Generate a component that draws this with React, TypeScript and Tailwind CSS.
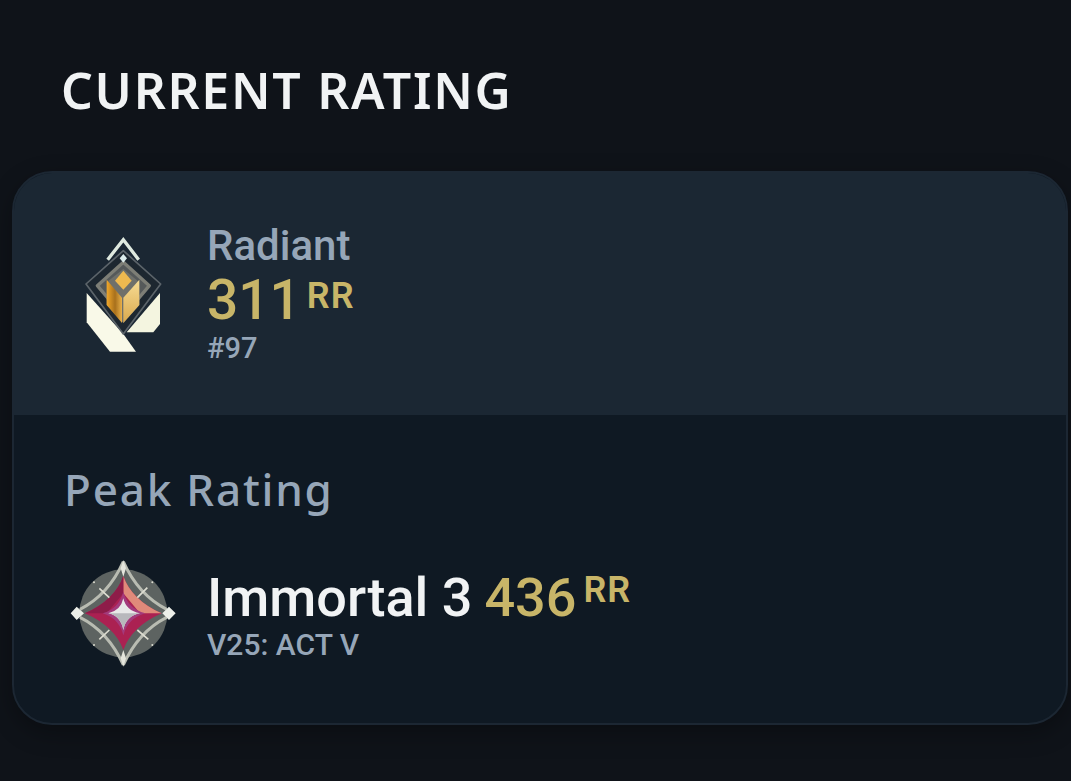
import React from "react";

const RadiantIcon = () => (
  <svg width="120" height="150" viewBox="0 0 360 450" className="block shrink-0">
    <defs>
      <linearGradient id="wingLeft" x1="0" y1="0" x2="1" y2="0">
        <stop offset="0" stopColor="#f0a72a" />
        <stop offset="0.55" stopColor="#a8701c" />
        <stop offset="1" stopColor="#e8b04a" />
      </linearGradient>
      <linearGradient id="wingRight" x1="0" y1="0" x2="0" y2="1">
        <stop offset="0" stopColor="#f7dc94" />
        <stop offset="1" stopColor="#d9a94e" />
      </linearGradient>
    </defs>
    <path d="M80 222 L190 345 L228 398 L150 398 L80 310 Z" fill="#f9f9e8" />
    <path d="M300 222 L300 315 L280 340 L200 340 Z" fill="#f4f5e0" />
    <path d="M190 95 L302 195 L190 345 L78 195 Z" fill="#1d2730" stroke="#5c646a" strokeWidth="5" strokeLinejoin="round" />
    <path d="M190 130 L268 200 L190 292 L112 200 Z" fill="#55595a" stroke="#7d7e76" strokeWidth="10" strokeLinejoin="round" />
    <path d="M190 150 L238 190 L238 258 L190 312 L140 258 L140 190 Z" fill="#6f706a" />
    <path d="M190 155 L215 185 L190 212 L165 185 Z" fill="#eeb94f" />
    <path d="M140 182 L186 236 L186 312 L140 258 Z" fill="url(#wingLeft)" />
    <path d="M238 182 L190 236 L190 312 L238 258 Z" fill="url(#wingRight)" />
    <path d="M143 122 L190 62 L236 122" fill="none" stroke="#dfe9df" strokeWidth="10" />
    <path d="M190 105 L201 118 L190 131 L179 118 Z" fill="#dcecec" />
  </svg>
);

const ImmortalIcon = () => (
  <svg width="125" height="125" viewBox="0 0 375 375" className="block shrink-0">
    <circle cx="190" cy="190" r="132" fill="#5d6361" />
    <path d="M190 35 Q145 135 60 178 M190 35 Q235 135 320 178 M190 345 Q145 245 60 202 M190 345 Q235 245 320 202" fill="none" stroke="#b9bcb2" strokeWidth="9" />
    <path d="M190 78 Q215 150 305 190 Q215 230 190 300 Q165 230 75 190 Q165 150 190 78 Z" fill="#ab2152" />
    <path d="M190 78 Q215 150 305 190 L240 190 L190 130 Z" fill="#e08a7a" />
    <path d="M190 78 L190 130 L140 190 L75 190 Q165 150 190 78 Z" fill="#8e1c49" />
    <path d="M190 125 Q203 175 256 190 Q203 205 190 256 Q177 205 128 190 Q177 175 190 125 Z" fill="#a33a7c" />
    <path d="M190 145 Q198 182 240 190 Q198 198 190 240 Q182 198 145 190 Q182 182 190 145 Z" fill="#e8e8e8" />
    <path d="M145 190 L240 190 Q198 198 190 240 Q182 198 145 190 Z" fill="#b8b8bc" />
    <path d="M118 115 L148 143 M262 113 L232 143 M118 268 L148 240 M265 268 L232 240" stroke="#dcdcd0" strokeWidth="5" />
    <circle cx="102" cy="97" r="3" fill="#dcdcd0" />
    <circle cx="277" cy="97" r="3" fill="#dcdcd0" />
    <circle cx="102" cy="285" r="3" fill="#dcdcd0" />
    <circle cx="277" cy="285" r="3" fill="#dcdcd0" />
    <path d="M190 30 L198 55 L190 80 L182 55 Z M190 350 L198 325 L190 300 L182 325 Z" fill="#e4e5dc" />
    <path d="M32 190 L50 170 L72 190 L50 210 Z M347 190 L327 170 L307 190 L327 210 Z" fill="#eceee8" />
  </svg>
);

export default function App() {
  return (
    <div className="h-[781px] w-[1071px] overflow-hidden bg-[#0f1319] font-['Roboto',sans-serif]">
      <h2 className="pl-[61px] pt-[60px] font-['Noto_Sans',sans-serif] text-[50px] font-semibold leading-[60px] tracking-[1.7px] text-[#f1f3f4]">
        CURRENT RATING
      </h2>
      <div className="ml-3 mt-[51px] w-[1056px] overflow-hidden rounded-[40px] border-2 border-[#1c2733] bg-[#0f1923] shadow-[0_8px_24px_rgba(0,0,0,0.3)]">
        <div className="flex h-[242px] items-center gap-[27px] bg-[#1b2733] pl-[46px]">
          <RadiantIcon />
          <div className="flex flex-col">
            <span className="text-[42px] font-medium leading-[50px] text-[#96a6b8]">Radiant</span>
            <span className="flex text-[55px] font-medium leading-[58px] text-[#c8b568]">
              311
              <span className="ml-[6px] mt-[5px] text-[36px] font-semibold leading-[40px] tracking-[1px]">RR</span>
            </span>
            <span className="text-[29px] font-medium leading-[38px] text-[#96a6b8]">#97</span>
          </div>
        </div>
        <div className="h-[308px] pl-[50px] pt-[44px]">
          <div className="font-['Noto_Sans',sans-serif] text-[44px] font-medium leading-[60px] tracking-[1.8px] text-[#96a6b8]">Peak Rating</div>
          <div className="mt-[31px] flex items-center gap-[22px]">
            <div className="-ml-[4px]">
              <ImmortalIcon />
            </div>
            <div className="flex flex-col pt-[4px]">
              <span className="flex text-[54px] font-medium leading-[60px] text-[#f1f3f4]">
                Immortal 3
                <span className="ml-[12px] text-[#c8b568]">436</span>
                <span className="ml-[7px] mt-[2px] text-[36px] font-semibold leading-[40px] tracking-[1px] text-[#c8b568]">RR</span>
              </span>
              <span className="text-[30px] font-medium leading-[34px] text-[#96a6b8]">V25: ACT V</span>
            </div>
          </div>
        </div>
      </div>
    </div>
  );
}
